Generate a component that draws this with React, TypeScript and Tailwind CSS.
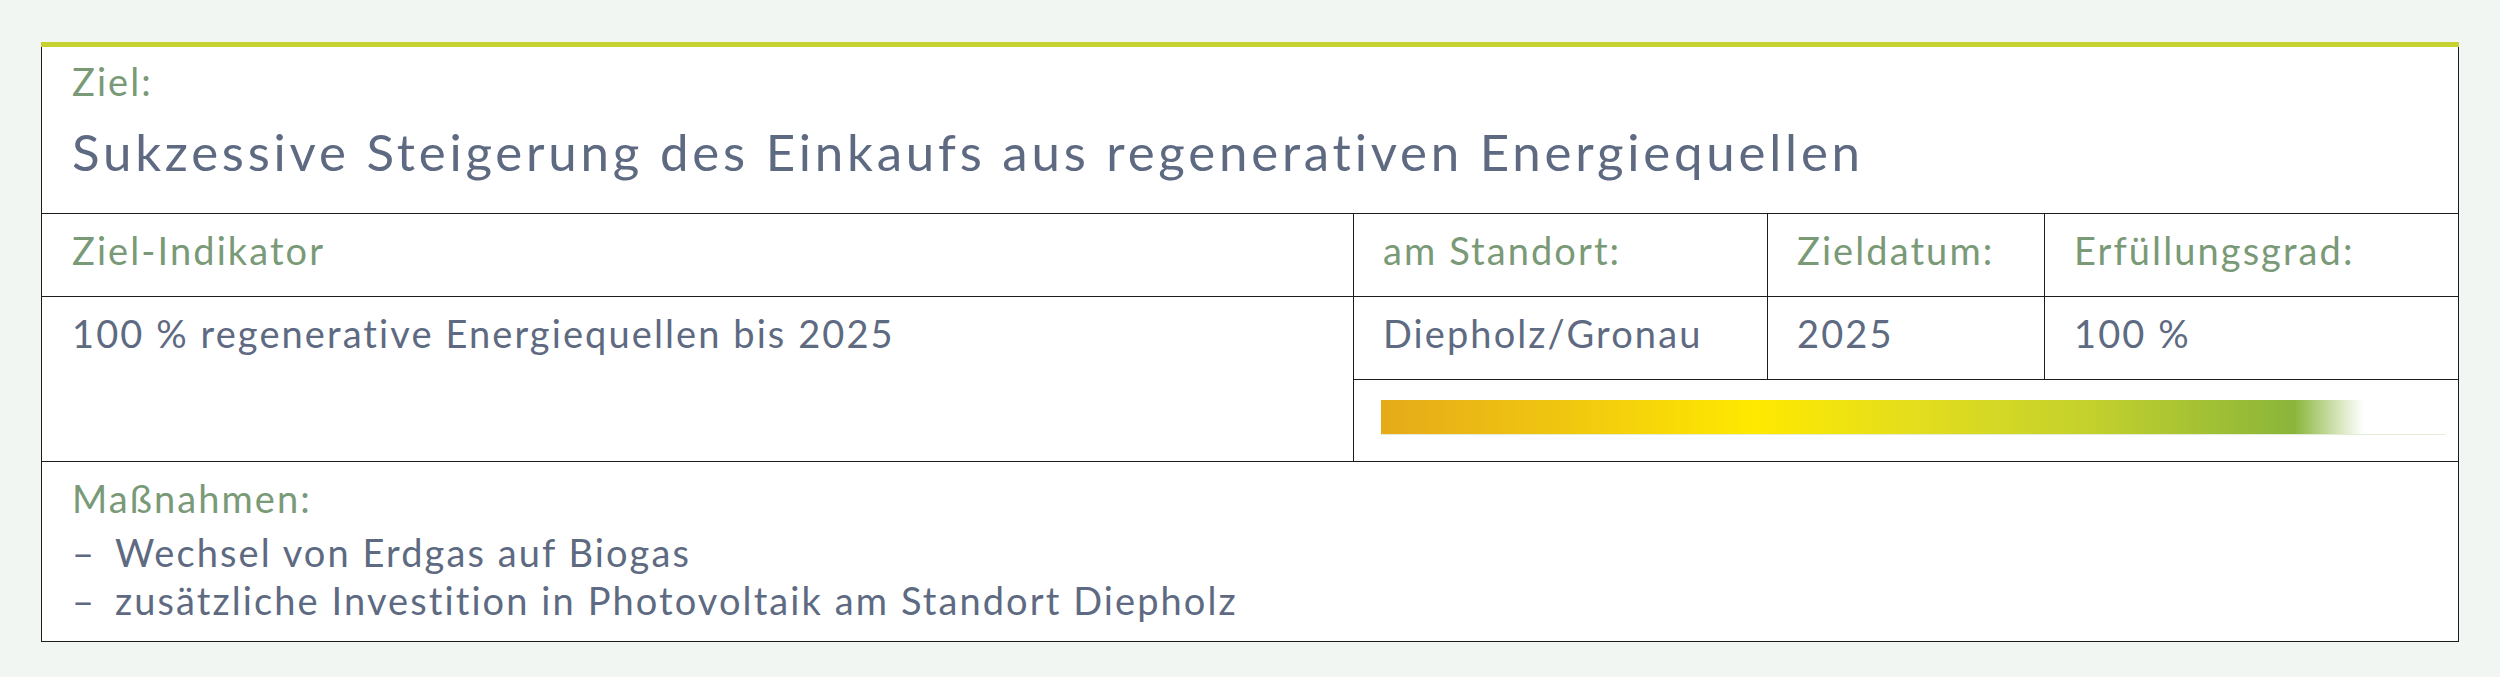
import React from "react";

const goal = {
  title: "Sukzessive Steigerung des Einkaufs aus regenerativen Energiequellen",
  indicator: "100 % regenerative Energiequellen bis 2025",
  location: "Diepholz/Gronau",
  date: "2025",
  degree: "100 %",
  measures: [
    "Wechsel von Erdgas auf Biogas",
    "zusätzliche Investition in Photovoltaik am Standort Diepholz",
  ],
};

// label in grün, werte in schiefergrau
const label = "text-[38px] leading-[48px] tracking-[0.055em] text-[#7a9a77]";
const value = "text-[38px] leading-[48px] tracking-[0.055em] text-[#5e6a81]";

export default function App() {
  return (
    <div className="min-h-[677px] bg-[#f2f6f3] px-[41px] pt-[42px] font-['Lato',sans-serif]">
      <div className="border-t-[5px] border-[#c5d22f]">
        <div className="border-x border-b border-[#1c1c1c] bg-white">
          {/* Ziel */}
          <div className="px-[30px] pt-[10px] pb-[31px]">
            <div className={label}>Ziel:</div>
            <div className="mt-[17px] text-[51px] leading-[60px] tracking-[0.074em] text-[#5e6a81]">{goal.title}</div>
          </div>

          {/* Indikator-Tabelle */}
          <div className="grid grid-cols-[1311px_414px_277px_1fr] border-t border-[#1c1c1c]">
            <div className="h-[82px] px-[30px] pt-[12px]">
              <div className={label}>Ziel-Indikator</div>
            </div>
            <div className="h-[82px] border-l border-[#1c1c1c] px-[29px] pt-[12px]">
              <div className={label}>am Standort:</div>
            </div>
            <div className="h-[82px] border-l border-[#1c1c1c] px-[29px] pt-[12px]">
              <div className={label}>Zieldatum:</div>
            </div>
            <div className="h-[82px] border-l border-[#1c1c1c] px-[29px] pt-[12px]">
              <div className={label}>Erfüllungsgrad:</div>
            </div>

            <div className="row-span-2 border-t border-[#1c1c1c] px-[30px] pt-[12px]">
              <div className={value}>{goal.indicator}</div>
            </div>
            <div className="h-[83px] border-l border-t border-[#1c1c1c] px-[29px] pt-[12px]">
              <div className={value}>{goal.location}</div>
            </div>
            <div className="h-[83px] border-l border-t border-[#1c1c1c] px-[29px] pt-[12px]">
              <div className={value}>{goal.date}</div>
            </div>
            <div className="h-[83px] border-l border-t border-[#1c1c1c] px-[29px] pt-[12px]">
              <div className={value}>{goal.degree}</div>
            </div>

            <div className="col-span-3 h-[82px] border-l border-t border-[#1c1c1c] pl-[27px] pr-[13px] pt-[20px]">
              <div className="h-[35px] border-b border-[#e3ebd9]">
                <div className="h-[34px] w-[92.3%] bg-[linear-gradient(to_right,#e6aa1a_0%,#f1c90f_20%,#ffe900_38%,#e2dd1e_55%,#c4d12c_72%,#8ab53b_93%,#ffffff_100%)]" />
              </div>
            </div>
          </div>

          {/* Maßnahmen */}
          <div className="border-t border-[#1c1c1c] px-[30px] pt-[12px] pb-[17px]">
            <div className={label}>Maßnahmen:</div>
            <ul className="mt-[6px]">
              {goal.measures.map((m) => (
                <li key={m} className={`flex ${value}`}>
                  <span className="w-[43px] shrink-0">–</span>
                  <span>{m}</span>
                </li>
              ))}
            </ul>
          </div>
        </div>
      </div>
    </div>
  );
}
